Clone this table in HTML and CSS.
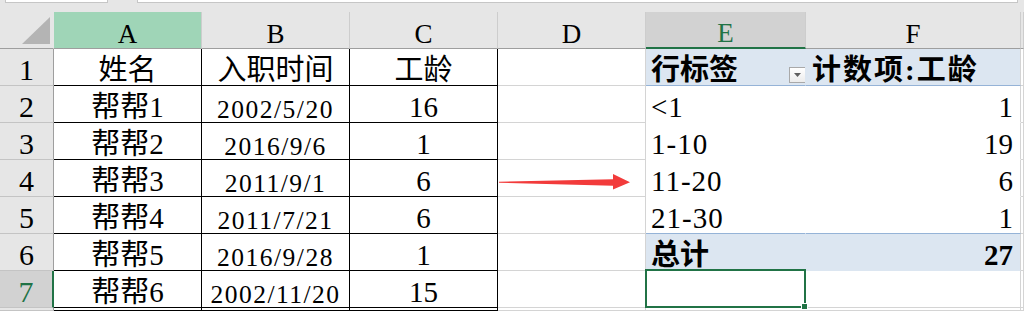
FILE: index.html
```html
<!DOCTYPE html>
<html lang="zh-CN">
<head>
<meta charset="utf-8">
<title>Sheet</title>
<link rel="stylesheet" href="styles.css">
</head>
<body>
<div class="topbar">
  <div class="namebox"></div>
  <div class="fx"></div>
</div>
<div class="sheet">
  <!-- header row -->
  <div class="c ch corner">
    <svg class="corner-tri" width="53" height="36" viewBox="0 0 53 36"><polygon points="22,32 50,5 50,32" fill="#b4b4b4"/></svg>
  </div>
  <div class="c ch hover">A</div>
  <div class="c ch">B</div>
  <div class="c ch">C</div>
  <div class="c ch">D</div>
  <div class="c ch active">E</div>
  <div class="c ch">F</div>
  <div class="c ch"></div>

  <!-- row 1 -->
  <div class="c rh">1</div>
  <div class="c t">姓名</div>
  <div class="c t">入职时间</div>
  <div class="c t">工龄</div>
  <div class="c"></div>
  <div class="c pe ph">行标签<span class="dd"><svg width="7" height="4" viewBox="0 0 7 4"><polygon points="0,0 7,0 3.5,4" fill="#5f5f5f"/></svg></span></div>
  <div class="c pf ph phf">计数项:工龄</div>
  <div class="c"></div>

  <!-- row 2 -->
  <div class="c rh">2</div>
  <div class="c t">帮帮1</div>
  <div class="c t date">2002/5/20</div>
  <div class="c t">16</div>
  <div class="c"></div>
  <div class="c pe pb lbl">&lt;1</div>
  <div class="c pf pb">1</div>
  <div class="c"></div>

  <!-- row 3 -->
  <div class="c rh">3</div>
  <div class="c t">帮帮2</div>
  <div class="c t date">2016/9/6</div>
  <div class="c t">1</div>
  <div class="c"></div>
  <div class="c pe pb lbl">1-10</div>
  <div class="c pf pb">19</div>
  <div class="c"></div>

  <!-- row 4 -->
  <div class="c rh">4</div>
  <div class="c t">帮帮3</div>
  <div class="c t date">2011/9/1</div>
  <div class="c t">6</div>
  <div class="c arrow-cell">
    <svg class="arrow" width="148" height="36" viewBox="0 0 148 36"><polygon points="1,21.7 115,19.3 115,14 132,22.2 115,29.4 115,25.7 1,22.7" fill="#f23b3b"/></svg>
  </div>
  <div class="c pe pb lbl">11-20</div>
  <div class="c pf pb">6</div>
  <div class="c"></div>

  <!-- row 5 -->
  <div class="c rh">5</div>
  <div class="c t">帮帮4</div>
  <div class="c t date">2011/7/21</div>
  <div class="c t">6</div>
  <div class="c"></div>
  <div class="c pe pl lbl">21-30</div>
  <div class="c pf pl">1</div>
  <div class="c"></div>

  <!-- row 6 -->
  <div class="c rh">6</div>
  <div class="c t">帮帮5</div>
  <div class="c t date">2016/9/28</div>
  <div class="c t">1</div>
  <div class="c"></div>
  <div class="c pe ptot">总计</div>
  <div class="c pf ptot">27</div>
  <div class="c"></div>

  <!-- row 7 -->
  <div class="c rh active">7</div>
  <div class="c t">帮帮6</div>
  <div class="c t date">2002/11/20</div>
  <div class="c t">15</div>
  <div class="c"></div>
  <div class="c selected"><span class="selbox"></span></div>
  <div class="c"></div>
  <div class="c"></div>

  <!-- row 8 (partial) -->
  <div class="c rh"></div>
  <div class="c t"></div>
  <div class="c t"></div>
  <div class="c t"></div>
  <div class="c"></div>
  <div class="c"></div>
  <div class="c"></div>
  <div class="c"></div>
</div>
</body>
</html>
```

FILE: styles.css
```css
html, body {
  margin: 0;
  padding: 0;
  background: #ffffff;
}
body {
  width: 1024px;
  height: 311px;
  overflow: hidden;
  font-family: "Liberation Serif", "Noto Sans CJK SC", serif;
  color: #000;
}

.topbar {
  height: 12px;
  background: #e6e6e6;
  display: flex;
  align-items: flex-start;
}
.namebox,
.fx {
  height: 2px;
  background: #ffffff;
  border: 1px solid #c6c6c6;
  border-top: none;
}
.namebox {
  margin-left: 5px;
  width: 101px;
}
.fx {
  margin-left: 29px;
  width: 879px;
}

.sheet {
  display: grid;
  grid-template-columns: 54px 148px 148px 148px 148px 160px 215px 3px;
  grid-template-rows: repeat(8, 37px) 3px;
}

.c {
  box-sizing: border-box;
  display: flex;
  align-items: flex-end;
  justify-content: center;
  border-right: 1px solid #d4d4d4;
  border-bottom: 1px solid #d4d4d4;
  font-size: 29px;
  line-height: 29px;
  white-space: nowrap;
  overflow: hidden;
}

/* column headers */
.ch {
  background: #e6e6e6;
  border-right-color: #cdcdcd;
  border-bottom-color: #9e9e9e;
  font-size: 27px;
  line-height: 27px;
}
.ch.hover {
  background: #9fd5b7;
}
.ch.active {
  background: #d2d2d2;
  color: #217346;
  border-bottom: 2px solid #217346;
}
.corner {
  position: relative;
  border-right-color: #e6e6e6;
}
.corner-tri {
  position: absolute;
  left: 0;
  top: 0;
}

/* row headers */
.rh {
  background: #e6e6e6;
  border-right-color: #9e9e9e;
  border-bottom-color: #c4c4c4;
  font-size: 30px;
  line-height: 30px;
}
.rh.active {
  background: #d2d2d2;
  color: #217346;
  border-right: 2px solid #217346;
}

/* bordered data table */
.t {
  border-right-color: #000;
  border-bottom-color: #000;
}
.date {
  font-size: 25.5px;
  line-height: 25.5px;
  letter-spacing: 1.5px;
}

/* pivot table */
.pe {
  justify-content: flex-start;
  padding-left: 5px;
  border-right-color: transparent;
}
.pf {
  justify-content: flex-end;
  padding-right: 7px;
}
.lbl {
  letter-spacing: 1px;
}
.ph {
  background: #dce6f1;
  border-bottom-color: #95b3d7;
  font-weight: bold;
  position: relative;
}
.phf {
  justify-content: flex-start;
  padding-left: 6px;
  padding-right: 0;
  letter-spacing: 2px;
}
.pb {
  border-bottom-color: transparent;
}
.pl {
  border-bottom-color: #95b3d7;
}
.ptot {
  background: #dce6f1;
  border-bottom-color: transparent;
  font-weight: bold;
}

.dd {
  position: absolute;
  right: -1px;
  top: 18px;
  width: 17px;
  height: 16px;
  box-sizing: border-box;
  border: 1px solid #a9a9a9;
  background: linear-gradient(#ffffff, #ececec);
  display: flex;
  align-items: center;
  justify-content: center;
}

/* arrow drawn over column D */
.arrow-cell {
  position: relative;
  overflow: visible;
}
.arrow {
  position: absolute;
  left: 0;
  top: 0;
}

/* active cell E7 */
.selected {
  position: relative;
  overflow: visible;
}
.selbox {
  position: absolute;
  top: -2px;
  left: -1px;
  right: -1px;
  bottom: -1px;
  border: 2px solid #217346;
}
.selbox::after {
  content: "";
  position: absolute;
  right: -4px;
  bottom: -4px;
  width: 5px;
  height: 5px;
  background: #217346;
  border: 1px solid #ffffff;
}
```
